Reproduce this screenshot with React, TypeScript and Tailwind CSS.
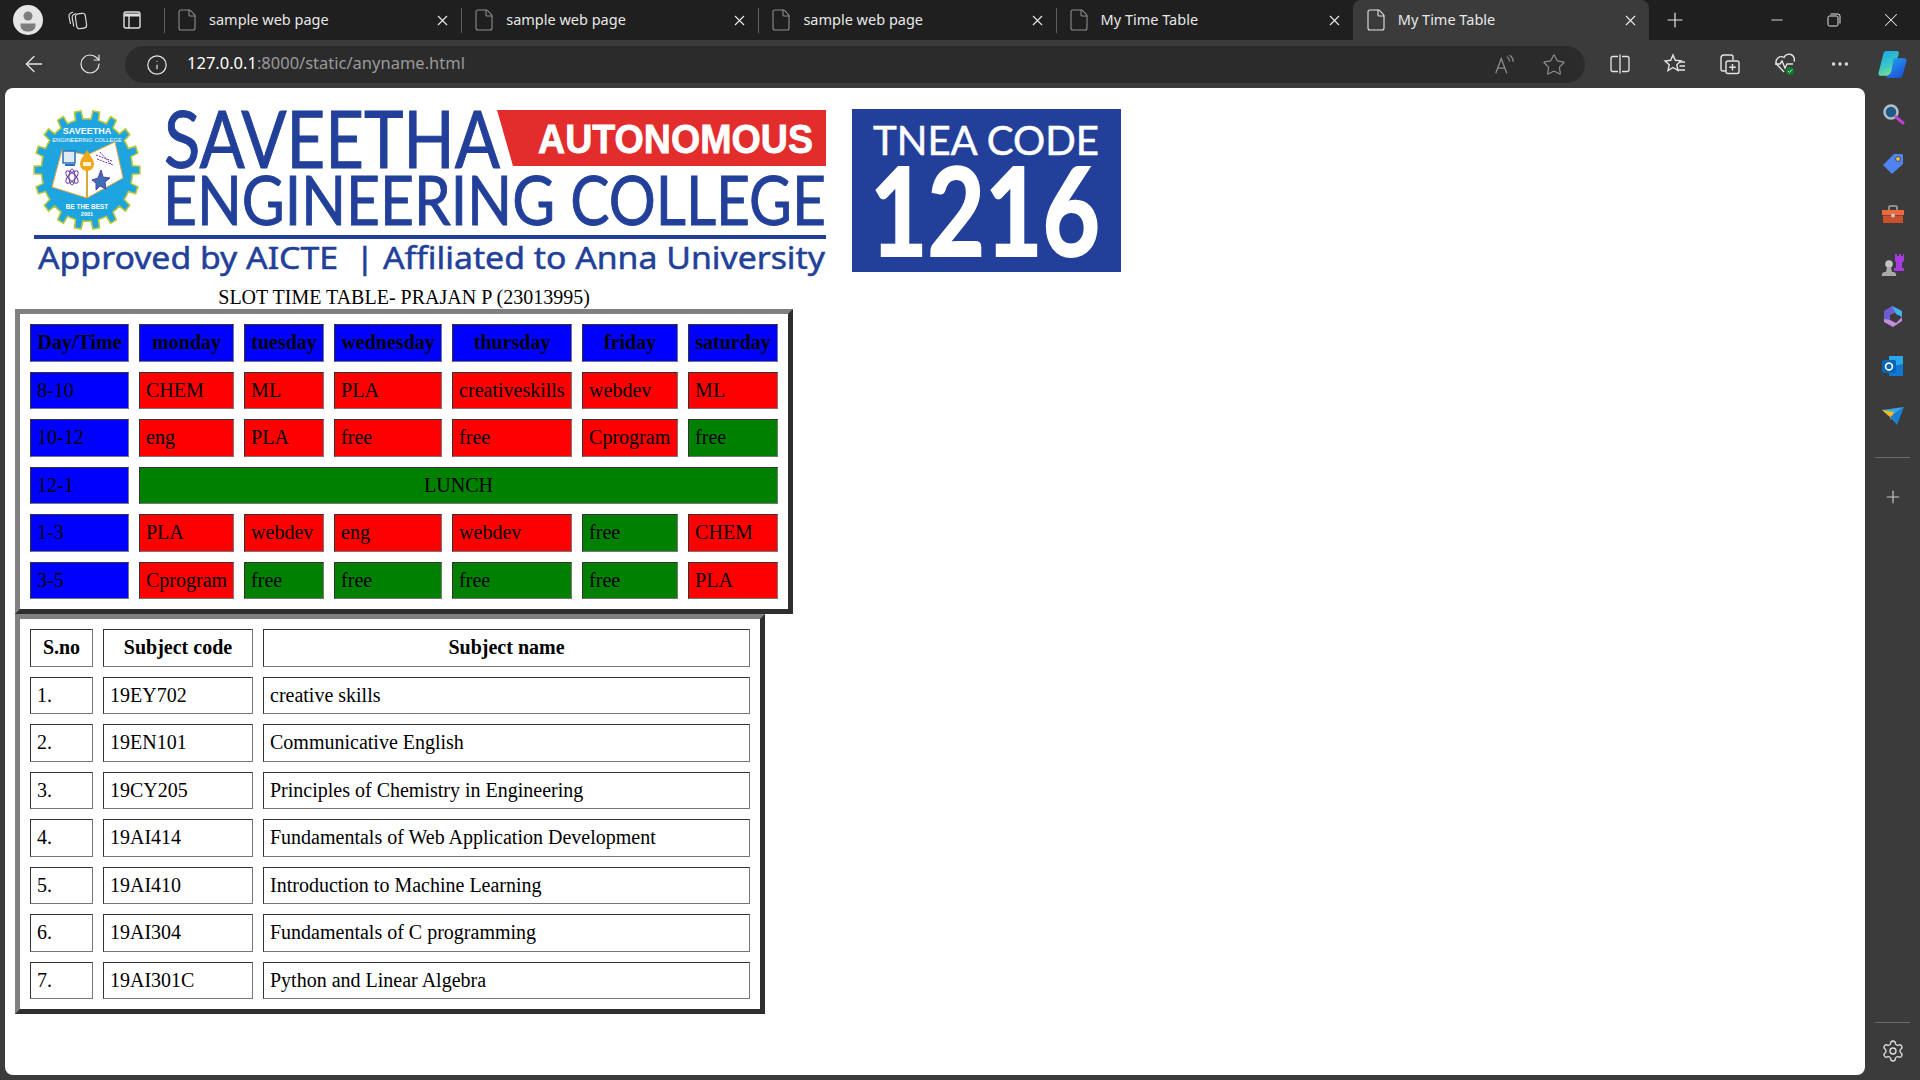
import React from 'react';
import { ArrowLeft, RotateCw, Info, Star, X, Plus, Minus, File, MoreHorizontal, Settings } from 'lucide-react';

const tabs = [
  { title: 'sample web page', active: false },
  { title: 'sample web page', active: false },
  { title: 'sample web page', active: false },
  { title: 'My Time Table', active: false },
  { title: 'My Time Table', active: true },
];

type Slot = { text: string; tone: 'red' | 'green' };
const r = (text: string): Slot => ({ text, tone: 'red' });
const g = (text: string): Slot => ({ text, tone: 'green' });

const days = ['monday', 'tuesday', 'wednesday', 'thursday', 'friday', 'saturday'];
const dayWidths = ['w-[95px]', 'w-[80px]', 'w-[108px]', 'w-[120px]', 'w-[96px]', 'w-[90px]'];

const slots: { time: string; cells: Slot[] }[] = [
  { time: '8-10', cells: [r('CHEM'), r('ML'), r('PLA'), r('creativeskills'), r('webdev'), r('ML')] },
  { time: '10-12', cells: [r('eng'), r('PLA'), r('free'), r('free'), r('Cprogram'), g('free')] },
  { time: '12-1', cells: [] },
  { time: '1-3', cells: [r('PLA'), r('webdev'), r('eng'), r('webdev'), g('free'), r('CHEM')] },
  { time: '3-5', cells: [r('Cprogram'), g('free'), g('free'), g('free'), g('free'), r('PLA')] },
];

const subjects = [
  ['1.', '19EY702', 'creative skills'],
  ['2.', '19EN101', 'Communicative English'],
  ['3.', '19CY205', 'Principles of Chemistry in Engineering'],
  ['4.', '19AI414', 'Fundamentals of Web Application Development'],
  ['5.', '19AI410', 'Introduction to Machine Learning'],
  ['6.', '19AI304', 'Fundamentals of C programming'],
  ['7.', '19AI301C', 'Python and Linear Algebra'],
];

const cell =
  'border border-t-[#333333] border-l-[#333333] border-r-[#777777] border-b-[#777777] px-[6px] py-[6.25px] leading-[23px] font-normal text-left';
const headCell =
  'border border-t-[#333333] border-l-[#333333] border-r-[#777777] border-b-[#777777] px-[6px] py-[6.25px] leading-[23px] font-bold text-center';
const tableBox =
  'border-separate border-spacing-[10px] border-[5px] border-t-[#808080] border-l-[#808080] border-r-[#2e2e2e] border-b-[#2e2e2e]';

// gear outline for the college emblem
const gearPath = (() => {
  const pts: string[] = [];
  const teeth = 18;
  for (let i = 0; i < teeth; i++) {
    const a = (i / teeth) * Math.PI * 2;
    const s = (Math.PI * 2) / teeth;
    const steps: [number, number][] = [
      [a - s * 0.5, 0.86],
      [a - s * 0.24, 0.86],
      [a - s * 0.18, 1],
      [a + s * 0.18, 1],
      [a + s * 0.24, 0.86],
    ];
    steps.forEach(([an, rad]) => {
      pts.push(`${(Math.cos(an) * rad * 53 + 87).toFixed(1)},${(Math.sin(an) * rad * 59.5 + 170).toFixed(1)}`);
    });
  }
  return 'M' + pts.join('L') + 'Z';
})();

const Emblem = () => (
  <g>
    <path d={gearPath} fill="#1ea4de" stroke="#b8c83c" strokeWidth="1.6" />
    <polygon points="62,150 87,155 115,142 123,178 87,198 52,187" fill="#ffffff" stroke="#f0a63a" strokeWidth="1" />
    <rect x="63" y="151" width="12" height="12" fill="#dcebf6" stroke="#2e6fb5" strokeWidth="1.5" />
    <rect x="65" y="164" width="10" height="2" fill="#2e6fb5" />
    <g stroke="#6b3fa0" strokeWidth="1" fill="none">
      <ellipse cx="72" cy="177" rx="8" ry="3.5" transform="rotate(45 72 177)" />
      <ellipse cx="72" cy="177" rx="8" ry="3.5" transform="rotate(-45 72 177)" />
      <ellipse cx="72" cy="177" rx="3" ry="8" />
      <path d="M96 155l16 6M97 159l16 6M100 152l11 12" strokeDasharray="2 1" />
    </g>
    <polygon points="101,170 103,177 110,178 105,182 106,189 100,186 96,190 96,183 92,180 98,178" fill="#3b6fb7" stroke="#5b3d99" strokeWidth="1" />
    <rect x="86" y="170" width="2" height="28" fill="#d9a73e" />
    <path d="M87 150c3 6 7 9 7 14a7 7 0 0 1-14 0c0-5 4-8 7-14z" fill="#f2a71b" />
    <rect x="83" y="162" width="8" height="4" fill="#fff3d0" />
    <text x="87" y="134" textAnchor="middle" fontFamily="'Liberation Sans',sans-serif" fontSize="9" fontWeight="700" fill="#ffffff">SAVEETHA</text>
    <text x="87" y="142" textAnchor="middle" fontFamily="'Liberation Sans',sans-serif" fontSize="5.8" fill="#ffffff">ENGINEERING COLLEGE</text>
    <text x="87" y="209" textAnchor="middle" fontFamily="'Liberation Sans',sans-serif" fontSize="6.4" fontWeight="700" fill="#ffffff">BE THE BEST</text>
    <text x="87" y="216" textAnchor="middle" fontFamily="'Liberation Sans',sans-serif" fontSize="5.6" fontWeight="700" fill="#ffffff">2001</text>
  </g>
);

const CollegeLogo = () => (
  <svg viewBox="15 98 837 188" className="w-[837px] h-[188px] shrink-0">
    <Emblem />
    <text x="164" y="168" fontFamily="Lato,sans-serif" fontSize="80" fill="#224099" stroke="#224099" strokeWidth="1" textLength="336" lengthAdjust="spacingAndGlyphs">SAVEETHA</text>
    <polygon points="497,110 826,110 826,166 513,166" fill="#e32d2d" />
    <text x="538" y="153" fontFamily="'Liberation Sans',sans-serif" fontSize="41" fontWeight="700" fill="#ffffff" stroke="#ffffff" strokeWidth="0.8" textLength="275" lengthAdjust="spacingAndGlyphs">AUTONOMOUS</text>
    <text x="163" y="225" fontFamily="Lato,sans-serif" fontSize="67" fill="#224099" stroke="#224099" strokeWidth="0.9" textLength="663" lengthAdjust="spacingAndGlyphs">ENGINEERING COLLEGE</text>
    <rect x="34" y="235" width="792" height="4" fill="#224099" />
    <text x="38" y="269" xmlSpace="preserve" fontFamily="'Noto Sans',sans-serif" fontSize="31" fill="#224099" stroke="#224099" strokeWidth="0.5" textLength="787" lengthAdjust="spacingAndGlyphs">Approved by AICTE  | Affiliated to Anna University</text>
  </svg>
);

const TneaBox = () => (
  <svg viewBox="852 109 269 163" className="w-[269px] h-[163px] mt-[11px] shrink-0">
    <rect x="852" y="109" width="269" height="163" fill="#224099" />
    <text x="873" y="155" fontFamily="Lato,sans-serif" fontSize="40" fill="#ffffff" stroke="#ffffff" strokeWidth="0.5" textLength="226" lengthAdjust="spacingAndGlyphs">TNEA CODE</text>
    <text x="870" y="256" fontFamily="Lato,sans-serif" fontSize="122" fontWeight="700" fill="#ffffff" stroke="#ffffff" strokeWidth="2" textLength="230" lengthAdjust="spacingAndGlyphs">1216</text>
  </svg>
);

const Avatar = () => (
  <svg viewBox="0 0 30 30" className="w-[30px] h-[30px]">
    <circle cx="15" cy="15" r="15" fill="#e6e6e6" />
    <circle cx="15" cy="11" r="4.5" fill="#7d7d7d" />
    <path d="M7.5 18.5h15v2a6 6 0 0 1-6 6h-3a6 6 0 0 1-6-6z" fill="#7d7d7d" />
  </svg>
);

const Workspaces = () => (
  <svg viewBox="0 0 24 24" className="w-[24px] h-[24px]" fill="none" stroke="#d8d8d8" strokeWidth="1.2" strokeLinejoin="round">
    <rect x="10" y="5.500" width="10" height="15" rx="3" transform="rotate(-8 15 13)" />
    <path d="M10 5.500L7.500 6.800C6.500 7.400 6 8.500 6.200 9.800L7.800 18.500" />
    <path d="M7 4L4.500 5.300C3.300 6 2.800 7.200 3 8.500L4.500 16" />
  </svg>
);

const VerticalTabs = () => (
  <svg viewBox="0 0 20 20" className="w-5 h-5" fill="none" stroke="#e0e0e0" strokeWidth="1.4">
    <rect x="2" y="2" width="16" height="16" rx="2" />
    <path d="M2.500 5h15" strokeWidth="3" />
    <path d="M7 6v12" />
  </svg>
);

const ReadAloud = () => (
  <svg viewBox="0 0 24 24" className="w-[22px] h-[22px]" fill="none" stroke="#8d8d8d" strokeWidth="1.4">
    <path d="M3 21l6-16 6 16M5.200 15.500h7.600" />
    <path d="M15 3c2 1 3 3 3.200 5M18 1.500c2.400 1.400 4 4 4 7" />
  </svg>
);

const SplitScreen = () => (
  <svg viewBox="0 0 24 24" className="w-[24px] h-[24px]" fill="none" stroke="#e4e4e4" strokeWidth="1.3">
    <path d="M10 4.500H5a2 2 0 0 0-2 2v11a2 2 0 0 0 2 2h5M14 4.500h5a2 2 0 0 1 2 2v11a2 2 0 0 1-2 2h-5" />
    <path d="M12 2.500v19" />
  </svg>
);

const Favorites = () => (
  <svg viewBox="0 0 24 24" className="w-[24px] h-[24px]" fill="none" stroke="#e4e4e4" strokeWidth="1.4">
    <path d="M10 3l2.300 5.300 5.700.6-4.200 3.800 1.200 5.700L10 15.500l-5 3 1.200-5.700L2 9l5.700-.700z" />
    <path d="M16 10h6M16.500 14h5.500M14 18h8" />
  </svg>
);

const Collections = () => (
  <svg viewBox="0 0 24 24" className="w-[24px] h-[24px]" fill="none" stroke="#e4e4e4" strokeWidth="1.4">
    <path d="M8 19H5a2 2 0 0 1-2-2V6a3 3 0 0 1 3-3h7a2 2 0 0 1 2 2v3" />
    <rect x="8" y="9" width="13" height="12.500" rx="2" />
    <path d="M14.500 12v6.500M11.200 15.200h6.600" />
  </svg>
);

const Health = () => (
  <svg viewBox="0 0 24 24" className="w-[24px] h-[24px]" fill="none">
    <path d="M11 20L3.500 12A5.200 5.200 0 0 1 11 5.500a5.200 5.200 0 0 1 10 4" stroke="#e4e4e4" strokeWidth="1.400" />
    <path d="M2 12h5l2-3 3 7 2-4h6" stroke="#e4e4e4" strokeWidth="1.400" />
    <circle cx="17" cy="19" r="4" fill="#0f7b2e" />
    <path d="M15 19l1.500 1.500 2.500-3" stroke="#bfe8c8" strokeWidth="1" />
  </svg>
);

const Copilot = () => (
  <svg viewBox="0 0 30 30" className="w-[31px] h-[31px]">
    <defs>
      <linearGradient id="cpA" x1="0" y1="0" x2="0.4" y2="1">
        <stop offset="0" stopColor="#19a3e8" />
        <stop offset="0.6" stopColor="#35c5c8" />
        <stop offset="1" stopColor="#77dc9a" />
      </linearGradient>
      <linearGradient id="cpB" x1="0.2" y1="0" x2="0.8" y2="1">
        <stop offset="0" stopColor="#1f9cf0" />
        <stop offset="1" stopColor="#1d4fd8" />
      </linearGradient>
    </defs>
    <path d="M9 2h10c2 0 2.500 1 2 3L15 23c-.700 2-2 3-4 3H4c-2 0-3-1-2.500-3L6 5c.500-2 1.500-3 3-3z" fill="url(#cpA)" />
    <path d="M16 9h10c2 0 3 1 2.500 3L25 25c-.500 2-1.500 3-3.500 3H10c-1.500 0-1-1 0-2 2-1 3-2 4-5z" fill="url(#cpB)" />
  </svg>
);

const sideIcons = [
  <svg key="search" viewBox="0 0 24 24" className="w-6 h-6" fill="none">
    <circle cx="10" cy="10" r="6.500" fill="#1d5a86" stroke="#b5bcc2" strokeWidth="2.500" />
    <path d="M15 15l7 6" stroke="#c23fd0" strokeWidth="3" strokeLinecap="round" />
  </svg>,
  <svg key="tag" viewBox="0 0 24 24" className="w-6 h-6">
    <path d="M13 2h8a1 1 0 0 1 1 1v9L11 22 2 13z" fill="#4f83f1" />
    <circle cx="17" cy="7" r="2.400" fill="#f3c91c" stroke="#26326e" strokeWidth="0.800" />
  </svg>,
  <svg key="tools" viewBox="0 0 24 24" className="w-6 h-6">
    <path d="M8 7V4a1 1 0 0 1 1-1h6a1 1 0 0 1 1 1v3" fill="none" stroke="#a9a9a9" strokeWidth="1.500" />
    <path d="M1 7h22v5H1z" fill="#ed6a3e" />
    <path d="M2 12.500h20V20H2z" fill="#c9502c" />
    <circle cx="12" cy="12.500" r="2" fill="#c8c8c8" />
  </svg>,
  <svg key="chess" viewBox="0 0 24 24" className="w-6 h-6">
    <path d="M14 1h2v2h2V1h2v2h2V1h1v7l-2 1.500V15h2v3H13v-3h2V9.500L14 8V1z" fill="#a63be0" />
    <circle cx="8" cy="11" r="3.800" fill="#c4c4c4" />
    <path d="M6 14h4l1 5H5zM1 23a3 3 0 0 1 3-4h8a3 3 0 0 1 3 4z" fill="#a9a9a9" />
  </svg>,
  <svg key="m365" viewBox="0 0 24 24" className="w-6 h-6" fill="none">
    <path d="M3 7l8-5 10 5v4l-6-3-6 3v7l-6-3z" fill="#6d5bd0" />
    <path d="M11 2l10 5v6l-6-3z" fill="#3fb2e8" />
    <path d="M9 16l6 3 6-6v4l-9 6-9-5v-3z" fill="#c58be0" />
  </svg>,
  <svg key="outlook" viewBox="0 0 24 24" className="w-6 h-6">
    <path d="M8 2h14v20H8z" fill="#28a8ea" />
    <path d="M8 13l14-3v12H8z" fill="#0f78d4" />
    <rect x="1" y="6" width="14" height="13" rx="1.500" fill="#0364b8" />
    <circle cx="8" cy="12.500" r="3.400" fill="none" stroke="#ffffff" strokeWidth="1.600" />
  </svg>,
  <svg key="send" viewBox="0 0 24 24" className="w-6 h-6">
    <path d="M1 6l22-3L9 13z" fill="#37a6e8" />
    <path d="M1 6l8 7 1 3 3-8z" fill="#f6b91f" />
    <path d="M23 3l-7 18-7-8z" fill="#1d7fd4" />
  </svg>,
];

export default function App() {
  return (
    <div className="w-screen h-screen overflow-hidden flex flex-col bg-[#3b3b3b] text-black font-['Liberation_Serif',serif] text-[20px]">
      {/* tab strip */}
      <div className="h-10 shrink-0 flex items-center bg-[#1f1f1f] font-['Noto_Sans',sans-serif] text-[14.5px] text-[#e8e8e8]">
        <div className="w-[56px] flex justify-center"><Avatar /></div>
        <div className="w-[44px] flex justify-center"><Workspaces /></div>
        <div className="w-[64px] flex justify-center"><VerticalTabs /></div>
        {tabs.map((t, i) => (
          <div
            key={i}
            className={
              t.active
                ? 'w-[296px] h-10 flex items-center pr-[10px] bg-[#3b3b3b] rounded-t-lg'
                : 'w-[297.2px] h-10 flex items-center pr-[10px]'
            }
          >
            <div className={!t.active ? 'w-px h-[25px] bg-[#5f5f5f]' : 'w-px h-[25px]'} />
            <File
              className={t.active ? 'ml-[10px] w-6 h-6 text-[#e4e4e4]' : 'ml-[10px] w-6 h-6 text-[#8c8c8c]'}
              strokeWidth={1.1}
            />
            <span className="ml-[10px] flex-1 truncate">{t.title}</span>
            <X className="w-[17px] h-[17px] text-[#ececec]" strokeWidth={1.5} />
          </div>
        ))}
        <div className="ml-[9px] w-[34px] flex justify-center"><Plus className="w-[24px] h-[24px] text-[#e6e6e6]" strokeWidth={1.2} /></div>
        <div className="flex-1" />
        <div className="w-[57px] flex justify-center"><Minus className="w-[18px] h-[18px] text-[#e6e6e6]" strokeWidth={1.2} /></div>
        <div className="w-[57px] flex justify-center">
          <svg viewBox="0 0 14 14" className="w-[14px] h-[14px]" fill="none" stroke="#e6e6e6" strokeWidth="1">
            <rect x="1" y="3" width="10" height="10" rx="1.500" />
            <path d="M3.500 1h7.500a2 2 0 0 1 2 2v7.500" />
          </svg>
        </div>
        <div className="w-[58px] flex justify-center"><X className="w-[22px] h-[22px] text-[#e6e6e6]" strokeWidth={1.1} /></div>
      </div>

      {/* address bar */}
      <div className="h-12 shrink-0 flex items-center">
        <div className="w-[68px] flex justify-center"><ArrowLeft className="w-[26px] h-[26px] text-[#e6e6e6]" strokeWidth={1.2} /></div>
        <div className="w-[44px] flex justify-center"><RotateCw className="w-[24px] h-[24px] text-[#e6e6e6]" strokeWidth={1.2} /></div>
        <div className="ml-[13px] w-[1460px] h-[37px] flex items-center rounded-full bg-[#2b2b2b] pl-[21px] pr-[6px] mb-[-1px]">
          <Info className="w-[22px] h-[22px] text-[#e6e6e6]" strokeWidth={1.3} />
          <span className="ml-[19px] flex-1 font-['Noto_Sans',sans-serif] text-[16.5px] text-[#9a9a9a] mt-[-2px]">
            <span className="text-white">127.0.0.1</span>:8000/static/anyname.html
          </span>
          <div className="w-[50px] flex justify-center"><ReadAloud /></div>
          <div className="w-[50px] flex justify-center"><Star className="w-[24px] h-[24px] text-[#8d8d8d]" strokeWidth={1.2} /></div>
        </div>
        <div className="ml-[7px] w-[55px] flex justify-center"><SplitScreen /></div>
        <div className="w-[55px] flex justify-center"><Favorites /></div>
        <div className="w-[55px] flex justify-center"><Collections /></div>
        <div className="w-[55px] flex justify-center"><Health /></div>
        <div className="w-[55px] flex justify-center"><MoreHorizontal className="w-[22px] h-[22px] text-[#e4e4e4]" strokeWidth={1.6} /></div>
        <div className="w-[50px] flex justify-center"><Copilot /></div>
      </div>

      <div className="flex-1 min-h-0 flex pl-[5px] pb-[5px]">
        {/* page */}
        <div className="flex-1 min-w-0 bg-white rounded-lg p-[10px] overflow-hidden">
          <div className="flex items-start">
            <CollegeLogo />
            <TneaBox />
          </div>

          <table className={tableBox}>
            <caption className="leading-[23px] text-center">SLOT TIME TABLE- PRAJAN P (23013995)</caption>
            <thead>
              <tr>
                <th className={`${headCell} w-[99px] bg-[#0000ff]`}>Day/Time</th>
                {days.map((d, i) => (
                  <th key={d} className={`${headCell} ${dayWidths[i]} bg-[#0000ff]`}>{d}</th>
                ))}
              </tr>
            </thead>
            <tbody>
              {slots.map(row => (
                <tr key={row.time}>
                  <td className={`${cell} bg-[#0000ff]`}>{row.time}</td>
                  {row.cells.length === 0 ? (
                    <td colSpan={6} className={`${cell} !text-center bg-[#008000]`}>LUNCH</td>
                  ) : (
                    row.cells.map((c, i) => (
                      <td key={i} className={`${cell} ${c.tone === 'red' ? 'bg-[#ff0000]' : 'bg-[#008000]'}`}>{c.text}</td>
                    ))
                  )}
                </tr>
              ))}
            </tbody>
          </table>

          <table className={tableBox}>
            <thead>
              <tr>
                <th className={`${headCell} w-[63px]`}>S.no</th>
                <th className={`${headCell} w-[150px]`}>Subject code</th>
                <th className={`${headCell} w-[487px]`}>Subject name</th>
              </tr>
            </thead>
            <tbody>
              {subjects.map(s => (
                <tr key={s[0]}>
                  {s.map((v, i) => (
                    <td key={i} className={cell}>{v}</td>
                  ))}
                </tr>
              ))}
            </tbody>
          </table>
        </div>

        {/* edge sidebar */}
        <div className="w-[55px] shrink-0 flex flex-col items-center pt-[14px]">
          <div className="flex flex-col items-center gap-[26.400px]">
            {sideIcons.map((icon, i) => (
              <div key={i} className="h-6 flex items-center">{icon}</div>
            ))}
          </div>
          <div className="mt-[29px] w-[35px] h-px bg-[#6a6a6a]" />
          <Plus className="mt-[29px] w-[20px] h-[20px] text-[#c8c8c8]" strokeWidth={1.4} />
          <div className="flex-1" />
          <div className="w-[35px] h-px bg-[#6a6a6a]" />
          <Settings className="mt-[16px] mb-[12px] w-[24px] h-[24px] text-[#e0e0e0]" strokeWidth={1.3} />
        </div>
      </div>
    </div>
  );
}
